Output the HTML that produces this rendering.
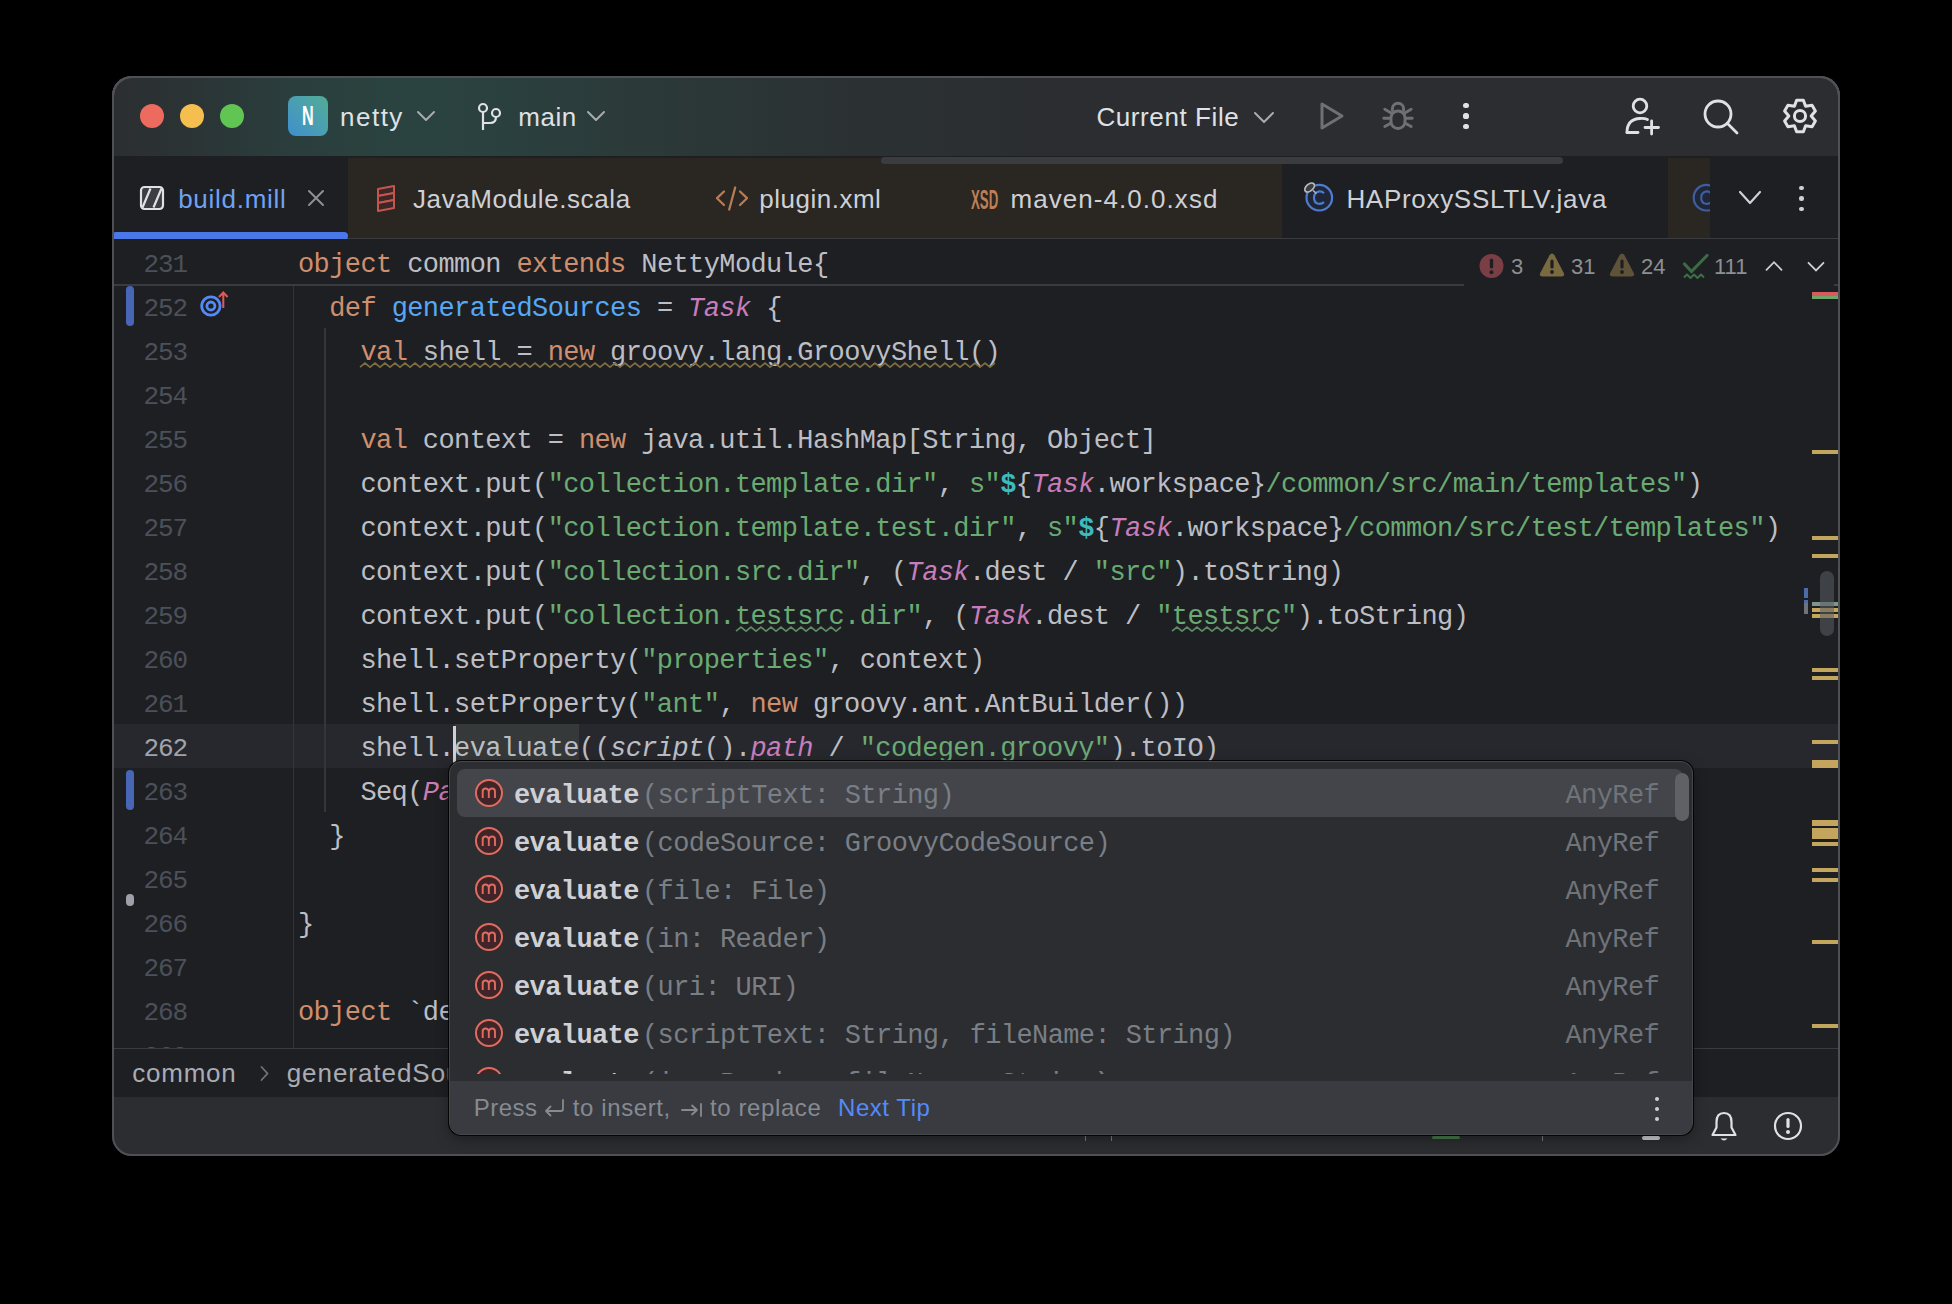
<!DOCTYPE html>
<html><head><meta charset="utf-8">
<style>
*{margin:0;padding:0;box-sizing:border-box}
html,body{width:1952px;height:1304px;background:#000;overflow:hidden}
body{position:relative;font-family:"Liberation Sans",sans-serif}
#win{position:absolute;left:0;top:0;width:1952px;height:1304px;clip-path:inset(76px 112px 148px 112px round 20px);background:#1E1F22}
.t{position:absolute;white-space:pre}
.r{position:absolute}
.s{position:absolute;overflow:visible}
.code{position:absolute;white-space:pre;font-family:"Liberation Mono",monospace;font-size:27px;line-height:27px;letter-spacing:-0.6px}
</style></head><body>
<div id="win">
<div class="r" style="left:112px;top:76px;width:1728px;height:80px;background:linear-gradient(90deg,#2B2E31 0px,#2B3536 90px,#2A3F3D 190px,#2A4340 290px,#2A413F 380px,#2B3A39 520px,#2B3234 720px,#2B2E31 900px,#2B2D30 1000px,#2B2D30 1728px);border-radius:0px;"></div><div class="r" style="left:140px;top:104px;width:24px;height:24px;border-radius:50%;background:#ED6A5E"></div><div class="r" style="left:180px;top:104px;width:24px;height:24px;border-radius:50%;background:#F4BF4F"></div><div class="r" style="left:220px;top:104px;width:24px;height:24px;border-radius:50%;background:#61C554"></div><div class="r" style="left:288px;top:96px;width:40px;height:40px;background:linear-gradient(45deg,#3E8FCC 0%,#4BA0B0 55%,#52AC94 100%);border-radius:8px;"></div><div class="t" style="left:301.50px;top:103.13px;font-size:27px;line-height:27px;color:#FFFFFF;font-family:'Liberation Sans';font-weight:400;letter-spacing:0px;transform:scaleX(0.6);transform-origin:0 0;font-weight:700;">N</div><div class="t" style="left:340.00px;top:103.68px;font-size:26px;line-height:26px;color:#DFE1E5;font-family:'Liberation Sans';font-weight:400;letter-spacing:1.5px;">netty</div><svg class="s" style="left:416px;top:110px;" width="20" height="12" viewBox="0 0 20 12"><polyline points="2,2 10.0,10 18,2" fill="none" stroke="#A8ABB0" stroke-width="2" stroke-linecap="round" stroke-linejoin="round"/></svg><svg class="s" style="left:476px;top:102px;" width="28" height="30" viewBox="0 0 28 30"><g fill="none" stroke="#DFE1E5" stroke-width="2.2"><circle cx="7" cy="6" r="4"/><circle cx="20" cy="11" r="4"/><path d="M7 10 V28"/><path d="M20 15 Q20 21 14 21 H7"/></g></svg><div class="t" style="left:518.30px;top:103.68px;font-size:26px;line-height:26px;color:#DFE1E5;font-family:'Liberation Sans';font-weight:400;letter-spacing:0.55px;">main</div><svg class="s" style="left:586px;top:110px;" width="20" height="12" viewBox="0 0 20 12"><polyline points="2,2 10.0,10 18,2" fill="none" stroke="#A8ABB0" stroke-width="2" stroke-linecap="round" stroke-linejoin="round"/></svg><div class="t" style="left:1096.40px;top:103.78px;font-size:26px;line-height:26px;color:#DFE1E5;font-family:'Liberation Sans';font-weight:400;letter-spacing:0.6px;">Current File</div><svg class="s" style="left:1253px;top:111px;" width="22" height="13" viewBox="0 0 22 13"><polyline points="2,2 11.0,11 20,2" fill="none" stroke="#A8ABB0" stroke-width="2" stroke-linecap="round" stroke-linejoin="round"/></svg><svg class="s" style="left:1316px;top:100px;" width="30" height="32" viewBox="0 0 30 32"><path d="M6 4 L6 28 L26 16 Z" fill="none" stroke="#6E7074" stroke-width="3" stroke-linejoin="round"/></svg><svg class="s" style="left:1380px;top:100px;" width="36" height="32" viewBox="0 0 36 32"><g fill="none" stroke="#6E7074" stroke-width="2.9" stroke-linecap="round"><path d="M12.4 10.5 V8.8 A5.6 5.6 0 0 1 23.6 8.8 V10.5"/><rect x="11" y="11" width="14" height="17.5" rx="7"/><path d="M4.8 9.3 L10.8 12.8 M3.8 18.2 H10.5 M4.8 26.6 L10.8 23.2 M31.2 9.3 L25.2 12.8 M32.2 18.2 H25.5 M31.2 26.6 L25.2 23.2"/></g></svg><div class="r" style="left:1463.4px;top:102.9px;width:5.2px;height:5.2px;border-radius:50%;background:#DFE1E5"></div><div class="r" style="left:1463.4px;top:113.4px;width:5.2px;height:5.2px;border-radius:50%;background:#DFE1E5"></div><div class="r" style="left:1463.4px;top:123.9px;width:5.2px;height:5.2px;border-radius:50%;background:#DFE1E5"></div><svg class="s" style="left:1622px;top:96px;" width="42" height="42" viewBox="0 0 42 42"><g fill="none" stroke="#DFE1E5" stroke-width="2.8" stroke-linecap="round"><circle cx="18" cy="10" r="6.8"/><path d="M5 36.5 Q5 23 18 22.5 Q23 22.3 25.5 23.5"/><path d="M5 36.5 H16"/><path d="M29.6 25 V38 M23 31.5 H36.5"/></g></svg><svg class="s" style="left:1702px;top:98px;" width="40" height="40" viewBox="0 0 40 40"><g fill="none" stroke="#DFE1E5" stroke-width="2.8" stroke-linecap="round"><circle cx="16" cy="16" r="13"/><path d="M25.5 25.5 L35 35"/></g></svg><svg class="s" style="left:1783px;top:99px;" width="34" height="34" viewBox="0 0 34 34"><g fill="none" stroke="#DFE1E5" stroke-width="3" stroke-linejoin="round"><path d="M13.63 1.15 L20.37 1.15 L22.60 7.30 L29.04 6.16 L32.41 11.99 L28.20 17.00 L32.41 22.01 L29.04 27.84 L22.60 26.70 L20.37 32.85 L13.63 32.85 L11.40 26.70 L4.96 27.84 L1.59 22.01 L5.80 17.00 L1.59 11.99 L4.96 6.16 L11.40 7.30 Z"/><circle cx="17" cy="17" r="5.6"/></g></svg><div class="r" style="left:112px;top:156px;width:1728px;height:83px;background:#1E1F22;border-radius:0px;"></div><div class="r" style="left:348px;top:158px;width:934px;height:80px;background:#2A2622;border-radius:0px;"></div><div class="r" style="left:1668px;top:158px;width:42px;height:80px;background:#2A2622;border-radius:0px;"></div><div class="r" style="left:112px;top:238px;width:1728px;height:1px;background:#393B40;border-radius:0px;"></div><div class="r" style="left:881px;top:157px;width:682px;height:7px;background:#3A3C40;border-radius:3.5px;"></div><div class="r" style="left:112px;top:232px;width:236px;height:8px;background:#4A78E8;border-radius:4px;"></div><svg class="s" style="left:139px;top:185px;" width="26" height="26" viewBox="0 0 26 26"><rect x="2" y="2" width="22" height="22" rx="3.5" fill="#3C3E43" stroke="#DFE1E5" stroke-width="2.2"/><path d="M3.5 22.5 L11.5 3.5 M14.5 22.5 L22.5 3.5" stroke="#DFE1E5" stroke-width="2.2" fill="none"/></svg><div class="t" style="left:178.20px;top:185.98px;font-size:26px;line-height:26px;color:#6FA2F3;font-family:'Liberation Sans';font-weight:400;letter-spacing:0.72px;">build.mill</div><svg class="s" style="left:306px;top:188px;" width="20" height="20" viewBox="0 0 20 20"><path d="M3 3 L17 17 M17 3 L3 17" stroke="#8C8F94" stroke-width="2" stroke-linecap="round"/></svg><svg class="s" style="left:372px;top:182px;" width="28" height="32" viewBox="0 0 28 32"><g fill="#3A2726" stroke="#C4554F" stroke-width="2" stroke-linejoin="round"><path d="M6 7 L22 4 V11 L6 14 Z"/><path d="M6 14 L22 11 V18 L6 21 Z"/><path d="M6 21 L22 18 V26 L6 29 Z"/></g></svg><div class="t" style="left:413.00px;top:185.98px;font-size:26px;line-height:26px;color:#CED0D6;font-family:'Liberation Sans';font-weight:400;letter-spacing:0.6px;">JavaModule.scala</div><svg class="s" style="left:714px;top:184px;" width="36" height="28" viewBox="0 0 36 28"><g fill="none" stroke="#B97B55" stroke-width="2.3" stroke-linecap="round" stroke-linejoin="round"><path d="M10 7.5 L3 14.2 L10 21"/><path d="M26 7.5 L33 14.2 L26 21"/><path d="M21.2 3.5 L15.2 25.5"/></g></svg><div class="t" style="left:759.30px;top:185.98px;font-size:26px;line-height:26px;color:#CED0D6;font-family:'Liberation Sans';font-weight:400;letter-spacing:0.5px;">plugin.xml</div><div class="t" style="left:970.50px;top:186.63px;font-size:27px;line-height:27px;color:#BD7F55;font-family:'Liberation Sans';font-weight:400;letter-spacing:0px;transform:scaleX(0.49);transform-origin:0 0;font-weight:700;">XSD</div><div class="t" style="left:1010.50px;top:185.98px;font-size:26px;line-height:26px;color:#CED0D6;font-family:'Liberation Sans';font-weight:400;letter-spacing:1.05px;">maven-4.0.0.xsd</div><svg class="s" style="left:1302px;top:180px;" width="36" height="36" viewBox="0 0 36 36"><circle cx="17.3" cy="17.7" r="12.8" fill="#1F2638" stroke="#4F7BD0" stroke-width="2.2"/><path d="M22 13.2 Q19.5 11 16.5 11.6 Q12 12.6 12 17.7 Q12 22.8 16.5 23.8 Q19.5 24.4 22 22.2" fill="none" stroke="#4F7BD0" stroke-width="2.2"/><ellipse cx="7.6" cy="7.5" rx="5.6" ry="3.4" transform="rotate(-40 7.6 7.5)" fill="#3A3C40" stroke="#B4B7BC" stroke-width="1.8"/><path d="M11 10.5 L14.5 13.5" stroke="#B4B7BC" stroke-width="1.6"/></svg><div class="t" style="left:1346.40px;top:185.98px;font-size:26px;line-height:26px;color:#CED0D6;font-family:'Liberation Sans';font-weight:400;letter-spacing:0.7px;">HAProxySSLTLV.java</div><svg style="position:absolute;left:1690px;top:180px;overflow:hidden" width="20" height="36" viewBox="0 0 20 36"><circle cx="16.5" cy="17.7" r="12.8" fill="#1F2638" stroke="#3F5E9E" stroke-width="2.2"/><path d="M21.2 13.2 Q18.7 11 15.7 11.6 Q11.2 12.6 11.2 17.7 Q11.2 22.8 15.7 23.8 Q18.7 24.4 21.2 22.2" fill="none" stroke="#3F5E9E" stroke-width="2.2"/></svg><svg class="s" style="left:1738px;top:190px;" width="24" height="15" viewBox="0 0 24 15"><polyline points="2,2 12.0,13 22,2" fill="none" stroke="#CED0D6" stroke-width="2.2" stroke-linecap="round" stroke-linejoin="round"/></svg><div class="r" style="left:1799.3999999999999px;top:185.8px;width:4.4px;height:4.4px;border-radius:50%;background:#CED0D6"></div><div class="r" style="left:1799.3999999999999px;top:196.3px;width:4.4px;height:4.4px;border-radius:50%;background:#CED0D6"></div><div class="r" style="left:1799.3999999999999px;top:206.8px;width:4.4px;height:4.4px;border-radius:50%;background:#CED0D6"></div><div class="r" style="left:112px;top:239px;width:1728px;height:810px;background:#1E1F22;border-radius:0px;"></div><div class="r" style="left:112px;top:724px;width:1726px;height:44px;background:#26282D;border-radius:0px;"></div><div class="r" style="left:455px;top:724px;width:124px;height:44px;background:#36393A;border-radius:0px;"></div><div class="r" style="left:292.5px;top:284px;width:1.6px;height:765px;background:#33353A;border-radius:0px;"></div><div class="r" style="left:324.2px;top:328px;width:1.6px;height:484px;background:#33353A;border-radius:0px;"></div><div class="r" style="left:112px;top:284px;width:1352px;height:2px;background:#393B40;border-radius:0px;"></div><div class="r" style="left:1834px;top:284px;width:6px;height:2px;background:#393B40;border-radius:0px;"></div><div class="t" style="left:143.5px;top:252.38px;font-family:'Liberation Mono';font-size:26px;line-height:26px;letter-spacing:-1.15px;color:#4B5059">231</div><div class="code" style="left:298.0px;top:252.32px"><span style="color:#CF8E6D;">object</span><span style="color:#BCBEC4;"> common </span><span style="color:#CF8E6D;">extends</span><span style="color:#BCBEC4;"> NettyModule{</span></div><div class="t" style="left:143.5px;top:296.38px;font-family:'Liberation Mono';font-size:26px;line-height:26px;letter-spacing:-1.15px;color:#4B5059">252</div><div class="code" style="left:298.0px;top:296.32px"><span style="color:#BCBEC4;">  </span><span style="color:#CF8E6D;">def</span><span style="color:#BCBEC4;"> </span><span style="color:#56A8F5;">generatedSources</span><span style="color:#BCBEC4;"> = </span><span style="color:#C77DBB;font-style:italic;">Task</span><span style="color:#BCBEC4;"> {</span></div><div class="t" style="left:143.5px;top:340.38px;font-family:'Liberation Mono';font-size:26px;line-height:26px;letter-spacing:-1.15px;color:#4B5059">253</div><div class="code" style="left:298.0px;top:340.32px"><span style="color:#BCBEC4;">    </span><span style="color:#CF8E6D;">val</span><span style="color:#BCBEC4;"> shell = </span><span style="color:#CF8E6D;">new</span><span style="color:#BCBEC4;"> groovy.lang.GroovyShell()</span></div><div class="t" style="left:143.5px;top:384.38px;font-family:'Liberation Mono';font-size:26px;line-height:26px;letter-spacing:-1.15px;color:#4B5059">254</div><div class="t" style="left:143.5px;top:428.38px;font-family:'Liberation Mono';font-size:26px;line-height:26px;letter-spacing:-1.15px;color:#4B5059">255</div><div class="code" style="left:298.0px;top:428.32px"><span style="color:#BCBEC4;">    </span><span style="color:#CF8E6D;">val</span><span style="color:#BCBEC4;"> context = </span><span style="color:#CF8E6D;">new</span><span style="color:#BCBEC4;"> java.util.HashMap[String, Object]</span></div><div class="t" style="left:143.5px;top:472.38px;font-family:'Liberation Mono';font-size:26px;line-height:26px;letter-spacing:-1.15px;color:#4B5059">256</div><div class="code" style="left:298.0px;top:472.32px"><span style="color:#BCBEC4;">    context.put(</span><span style="color:#6AAB73;">&quot;collection.template.dir&quot;</span><span style="color:#BCBEC4;">, </span><span style="color:#6AAB73;">s&quot;</span><span style="color:#3FB9C0;font-weight:700;">$</span><span style="color:#BCBEC4;">{</span><span style="color:#C77DBB;font-style:italic;">Task</span><span style="color:#BCBEC4;">.workspace}</span><span style="color:#6AAB73;">/common/src/main/templates&quot;</span><span style="color:#BCBEC4;">)</span></div><div class="t" style="left:143.5px;top:516.38px;font-family:'Liberation Mono';font-size:26px;line-height:26px;letter-spacing:-1.15px;color:#4B5059">257</div><div class="code" style="left:298.0px;top:516.32px"><span style="color:#BCBEC4;">    context.put(</span><span style="color:#6AAB73;">&quot;collection.template.test.dir&quot;</span><span style="color:#BCBEC4;">, </span><span style="color:#6AAB73;">s&quot;</span><span style="color:#3FB9C0;font-weight:700;">$</span><span style="color:#BCBEC4;">{</span><span style="color:#C77DBB;font-style:italic;">Task</span><span style="color:#BCBEC4;">.workspace}</span><span style="color:#6AAB73;">/common/src/test/templates&quot;</span><span style="color:#BCBEC4;">)</span></div><div class="t" style="left:143.5px;top:560.38px;font-family:'Liberation Mono';font-size:26px;line-height:26px;letter-spacing:-1.15px;color:#4B5059">258</div><div class="code" style="left:298.0px;top:560.32px"><span style="color:#BCBEC4;">    context.put(</span><span style="color:#6AAB73;">&quot;collection.src.dir&quot;</span><span style="color:#BCBEC4;">, (</span><span style="color:#C77DBB;font-style:italic;">Task</span><span style="color:#BCBEC4;">.dest / </span><span style="color:#6AAB73;">&quot;src&quot;</span><span style="color:#BCBEC4;">).toString)</span></div><div class="t" style="left:143.5px;top:604.38px;font-family:'Liberation Mono';font-size:26px;line-height:26px;letter-spacing:-1.15px;color:#4B5059">259</div><div class="code" style="left:298.0px;top:604.32px"><span style="color:#BCBEC4;">    context.put(</span><span style="color:#6AAB73;">&quot;collection.testsrc.dir&quot;</span><span style="color:#BCBEC4;">, (</span><span style="color:#C77DBB;font-style:italic;">Task</span><span style="color:#BCBEC4;">.dest / </span><span style="color:#6AAB73;">&quot;testsrc&quot;</span><span style="color:#BCBEC4;">).toString)</span></div><div class="t" style="left:143.5px;top:648.38px;font-family:'Liberation Mono';font-size:26px;line-height:26px;letter-spacing:-1.15px;color:#4B5059">260</div><div class="code" style="left:298.0px;top:648.32px"><span style="color:#BCBEC4;">    shell.setProperty(</span><span style="color:#6AAB73;">&quot;properties&quot;</span><span style="color:#BCBEC4;">, context)</span></div><div class="t" style="left:143.5px;top:692.38px;font-family:'Liberation Mono';font-size:26px;line-height:26px;letter-spacing:-1.15px;color:#4B5059">261</div><div class="code" style="left:298.0px;top:692.32px"><span style="color:#BCBEC4;">    shell.setProperty(</span><span style="color:#6AAB73;">&quot;ant&quot;</span><span style="color:#BCBEC4;">, </span><span style="color:#CF8E6D;">new</span><span style="color:#BCBEC4;"> groovy.ant.AntBuilder())</span></div><div class="t" style="left:143.5px;top:736.38px;font-family:'Liberation Mono';font-size:26px;line-height:26px;letter-spacing:-1.15px;color:#A1A3AB">262</div><div class="code" style="left:298.0px;top:736.32px"><span style="color:#BCBEC4;">    shell.evaluate((</span><span style="color:#BCBEC4;font-style:italic;">script</span><span style="color:#BCBEC4;">().</span><span style="color:#C77DBB;font-style:italic;">path</span><span style="color:#BCBEC4;"> / </span><span style="color:#6AAB73;">&quot;codegen.groovy&quot;</span><span style="color:#BCBEC4;">).toIO)</span></div><div class="t" style="left:143.5px;top:780.38px;font-family:'Liberation Mono';font-size:26px;line-height:26px;letter-spacing:-1.15px;color:#4B5059">263</div><div class="code" style="left:298.0px;top:780.32px"><span style="color:#BCBEC4;">    Seq(</span><span style="color:#C77DBB;font-style:italic;">PathRef</span><span style="color:#BCBEC4;">(Task.dest))</span></div><div class="t" style="left:143.5px;top:824.38px;font-family:'Liberation Mono';font-size:26px;line-height:26px;letter-spacing:-1.15px;color:#4B5059">264</div><div class="code" style="left:298.0px;top:824.32px"><span style="color:#BCBEC4;">  }</span></div><div class="t" style="left:143.5px;top:868.38px;font-family:'Liberation Mono';font-size:26px;line-height:26px;letter-spacing:-1.15px;color:#4B5059">265</div><div class="t" style="left:143.5px;top:912.38px;font-family:'Liberation Mono';font-size:26px;line-height:26px;letter-spacing:-1.15px;color:#4B5059">266</div><div class="code" style="left:298.0px;top:912.32px"><span style="color:#BCBEC4;">}</span></div><div class="t" style="left:143.5px;top:956.38px;font-family:'Liberation Mono';font-size:26px;line-height:26px;letter-spacing:-1.15px;color:#4B5059">267</div><div class="t" style="left:143.5px;top:1000.38px;font-family:'Liberation Mono';font-size:26px;line-height:26px;letter-spacing:-1.15px;color:#4B5059">268</div><div class="code" style="left:298.0px;top:1000.32px"><span style="color:#CF8E6D;">object</span><span style="color:#BCBEC4;"> `dev` </span><span style="color:#CF8E6D;">extends</span><span style="color:#BCBEC4;"> NettyModule</span></div><div class="t" style="left:143.5px;top:1044.38px;font-family:'Liberation Mono';font-size:26px;line-height:26px;letter-spacing:-1.15px;color:#4B5059">269</div><div class="code" style="left:298.0px;top:1044.32px"><span style="color:#BCBEC4;">  </span></div><svg class="s" style="left:360px;top:362px;" width="640" height="7" viewBox="0 0 640 7"><path d="M0 4.2 L5.0 0 L10.0 4.2 L15.0 0 L20.0 4.2 L25.0 0 L30.0 4.2 L35.0 0 L40.0 4.2 L45.0 0 L50.0 4.2 L55.0 0 L60.0 4.2 L65.0 0 L70.0 4.2 L75.0 0 L80.0 4.2 L85.0 0 L90.0 4.2 L95.0 0 L100.0 4.2 L105.0 0 L110.0 4.2 L115.0 0 L120.0 4.2 L125.0 0 L130.0 4.2 L135.0 0 L140.0 4.2 L145.0 0 L150.0 4.2 L155.0 0 L160.0 4.2 L165.0 0 L170.0 4.2 L175.0 0 L180.0 4.2 L185.0 0 L190.0 4.2 L195.0 0 L200.0 4.2 L205.0 0 L210.0 4.2 L215.0 0 L220.0 4.2 L225.0 0 L230.0 4.2 L235.0 0 L240.0 4.2 L245.0 0 L250.0 4.2 L255.0 0 L260.0 4.2 L265.0 0 L270.0 4.2 L275.0 0 L280.0 4.2 L285.0 0 L290.0 4.2 L295.0 0 L300.0 4.2 L305.0 0 L310.0 4.2 L315.0 0 L320.0 4.2 L325.0 0 L330.0 4.2 L335.0 0 L340.0 4.2 L345.0 0 L350.0 4.2 L355.0 0 L360.0 4.2 L365.0 0 L370.0 4.2 L375.0 0 L380.0 4.2 L385.0 0 L390.0 4.2 L395.0 0 L400.0 4.2 L405.0 0 L410.0 4.2 L415.0 0 L420.0 4.2 L425.0 0 L430.0 4.2 L435.0 0 L440.0 4.2 L445.0 0 L450.0 4.2 L455.0 0 L460.0 4.2 L465.0 0 L470.0 4.2 L475.0 0 L480.0 4.2 L485.0 0 L490.0 4.2 L495.0 0 L500.0 4.2 L505.0 0 L510.0 4.2 L515.0 0 L520.0 4.2 L525.0 0 L530.0 4.2 L535.0 0 L540.0 4.2 L545.0 0 L550.0 4.2 L555.0 0 L560.0 4.2 L565.0 0 L570.0 4.2 L575.0 0 L580.0 4.2 L585.0 0 L590.0 4.2 L595.0 0 L600.0 4.2 L605.0 0 L610.0 4.2 L615.0 0 L620.0 4.2 L625.0 0 L630.0 4.2 L635.0 0" fill="none" stroke="#7F6E42" stroke-width="1.7" transform="translate(0,1)"/></svg><svg class="s" style="left:736px;top:626px;" width="110" height="7" viewBox="0 0 110 7"><path d="M0 4.2 L5.0 0 L10.0 4.2 L15.0 0 L20.0 4.2 L25.0 0 L30.0 4.2 L35.0 0 L40.0 4.2 L45.0 0 L50.0 4.2 L55.0 0 L60.0 4.2 L65.0 0 L70.0 4.2 L75.0 0 L80.0 4.2 L85.0 0 L90.0 4.2 L95.0 0 L100.0 4.2 L105.0 0" fill="none" stroke="#5E8A62" stroke-width="1.7" transform="translate(0,1)"/></svg><svg class="s" style="left:1172px;top:626px;" width="111" height="7" viewBox="0 0 111 7"><path d="M0 4.2 L5.0 0 L10.0 4.2 L15.0 0 L20.0 4.2 L25.0 0 L30.0 4.2 L35.0 0 L40.0 4.2 L45.0 0 L50.0 4.2 L55.0 0 L60.0 4.2 L65.0 0 L70.0 4.2 L75.0 0 L80.0 4.2 L85.0 0 L90.0 4.2 L95.0 0 L100.0 4.2 L105.0 0" fill="none" stroke="#5E8A62" stroke-width="1.7" transform="translate(0,1)"/></svg><div class="r" style="left:453px;top:726px;width:3px;height:41px;background:#CED0D6;border-radius:0px;"></div><div class="r" style="left:126px;top:286px;width:8px;height:40px;background:#4766B5;border-radius:4px;"></div><div class="r" style="left:126px;top:770px;width:8px;height:40px;background:#4766B5;border-radius:4px;"></div><div class="r" style="left:126px;top:894px;width:8px;height:12px;background:#9DA0A8;border-radius:4px;"></div><svg class="s" style="left:196px;top:288px;" width="36" height="36" viewBox="0 0 36 36"><g fill="none" stroke="#548AF7" stroke-width="2.8"><circle cx="14.9" cy="18" r="9.2"/><circle cx="14.9" cy="18" r="4"/></g><path d="M27.3 20 L27.3 5 M23 9 L27.3 4.5 L31.6 9" fill="none" stroke="#DB5C5C" stroke-width="2"/></svg><div class="r" style="left:1464px;top:244px;width:370px;height:40px;background:#1E1F22;border-radius:0px;"></div><svg class="s" style="left:1478px;top:253px;" width="28" height="26" viewBox="0 0 28 26"><circle cx="13.5" cy="13" r="12" fill="#7A3F45"/><rect x="11.8" y="5.5" width="3.4" height="10" rx="1.7" fill="#1E1F22"/><circle cx="13.5" cy="19.3" r="2" fill="#1E1F22"/></svg><div class="t" style="left:1511.00px;top:255.67px;font-size:22px;line-height:22px;color:#8C8F94;font-family:'Liberation Sans';font-weight:400;letter-spacing:0px;">3</div><svg class="s" style="left:1539px;top:252px;" width="26" height="26" viewBox="0 0 26 26"><path d="M13 1.5 Q14.5 1.5 15.5 3.2 L25 21.5 Q25.8 24.5 22.5 24.5 H3.5 Q0.2 24.5 1 21.5 L10.5 3.2 Q11.5 1.5 13 1.5 Z" fill="#7A6A40"/><rect x="11.4" y="7.5" width="3.2" height="9" rx="1.6" fill="#1E1F22"/><circle cx="13" cy="20" r="1.9" fill="#1E1F22"/></svg><div class="t" style="left:1571.00px;top:255.67px;font-size:22px;line-height:22px;color:#8C8F94;font-family:'Liberation Sans';font-weight:400;letter-spacing:0px;">31</div><svg class="s" style="left:1609px;top:252px;" width="26" height="26" viewBox="0 0 26 26"><path d="M13 1.5 Q14.5 1.5 15.5 3.2 L25 21.5 Q25.8 24.5 22.5 24.5 H3.5 Q0.2 24.5 1 21.5 L10.5 3.2 Q11.5 1.5 13 1.5 Z" fill="#5E5239"/><rect x="11.4" y="7.5" width="3.2" height="9" rx="1.6" fill="#1E1F22"/><circle cx="13" cy="20" r="1.9" fill="#1E1F22"/></svg><div class="t" style="left:1641.00px;top:255.67px;font-size:22px;line-height:22px;color:#8C8F94;font-family:'Liberation Sans';font-weight:400;letter-spacing:0px;">24</div><svg class="s" style="left:1682px;top:253px;" width="28" height="30" viewBox="0 0 28 30"><path d="M2.5 11 L9.5 18.5 L25 2.5" fill="none" stroke="#3D6A46" stroke-width="3.2" stroke-linecap="round" stroke-linejoin="round"/><path d="M2 24.5 L5 21.5 L8.5 25 L12 21.5 L15.5 25 L19 21.5 L22 24.5" fill="none" stroke="#3E6E48" stroke-width="2" stroke-linejoin="round"/></svg><div class="t" style="left:1714.00px;top:255.67px;font-size:22px;line-height:22px;color:#8C8F94;font-family:'Liberation Sans';font-weight:400;letter-spacing:0px;">111</div><svg class="s" style="left:1765px;top:260px;" width="18" height="12" viewBox="0 0 18 12"><polyline points="1.5,9.8 9,2.2 16.5,9.8" fill="none" stroke="#CED0D6" stroke-width="1.8" stroke-linecap="round"/></svg><svg class="s" style="left:1807px;top:261px;" width="18" height="12" viewBox="0 0 18 12"><polyline points="1.5,1.8 9,9.4 16.5,1.8" fill="none" stroke="#CED0D6" stroke-width="1.8" stroke-linecap="round"/></svg><div class="r" style="left:1812px;top:292px;width:28px;height:4px;background:#D95B5E;border-radius:0px;"></div><div class="r" style="left:1812px;top:296px;width:28px;height:2.5px;background:#6FA56A;border-radius:0px;"></div><div class="r" style="left:1812px;top:450px;width:28px;height:4px;background:#C4A55E;border-radius:0px;"></div><div class="r" style="left:1812px;top:536px;width:28px;height:4px;background:#C4A55E;border-radius:0px;"></div><div class="r" style="left:1812px;top:554px;width:28px;height:4px;background:#C4A55E;border-radius:0px;"></div><div class="r" style="left:1812px;top:607.6px;width:28px;height:4.0px;background:#C4A55E;border-radius:0px;"></div><div class="r" style="left:1812px;top:613.7px;width:28px;height:3.8999999999999773px;background:#C4A55E;border-radius:0px;"></div><div class="r" style="left:1812px;top:668px;width:28px;height:4px;background:#C4A55E;border-radius:0px;"></div><div class="r" style="left:1812px;top:676px;width:28px;height:4px;background:#C4A55E;border-radius:0px;"></div><div class="r" style="left:1812px;top:740px;width:28px;height:4px;background:#C4A55E;border-radius:0px;"></div><div class="r" style="left:1812px;top:760px;width:28px;height:8px;background:#C4A55E;border-radius:0px;"></div><div class="r" style="left:1812px;top:820px;width:28px;height:6px;background:#C4A55E;border-radius:0px;"></div><div class="r" style="left:1812px;top:828px;width:28px;height:11px;background:#C4A55E;border-radius:0px;"></div><div class="r" style="left:1812px;top:842px;width:28px;height:4px;background:#C4A55E;border-radius:0px;"></div><div class="r" style="left:1812px;top:868px;width:28px;height:4px;background:#C4A55E;border-radius:0px;"></div><div class="r" style="left:1812px;top:878px;width:28px;height:4px;background:#C4A55E;border-radius:0px;"></div><div class="r" style="left:1812px;top:940px;width:28px;height:4px;background:#C4A55E;border-radius:0px;"></div><div class="r" style="left:1812px;top:1024px;width:28px;height:4px;background:#C4A55E;border-radius:0px;"></div><div class="r" style="left:1812px;top:601.5px;width:28px;height:4px;background:#7D968A;border-radius:0px;"></div><div class="r" style="left:1804px;top:588px;width:4px;height:10px;background:#4C6CA8;border-radius:0px;"></div><div class="r" style="left:1804px;top:600px;width:4px;height:3px;background:#4C6CA8;border-radius:0px;"></div><div class="r" style="left:1804px;top:603px;width:4px;height:11px;background:#6F737A;border-radius:0px;"></div><div class="r" style="left:1820px;top:571px;width:14px;height:65px;background:rgba(90,93,99,0.55);border-radius:7px;"></div><div class="r" style="left:112px;top:1048px;width:1728px;height:1px;background:#393B40;border-radius:0px;"></div><div class="r" style="left:112px;top:1049px;width:1728px;height:48px;background:#1E1F22;border-radius:0px;"></div><div class="t" style="left:132.30px;top:1060.28px;font-size:26px;line-height:26px;color:#A9ACB2;font-family:'Liberation Sans';font-weight:400;letter-spacing:0.75px;">common</div><svg class="s" style="left:259px;top:1065px;" width="12" height="17" viewBox="0 0 12 17"><polyline points="2.5,2 8.5,8.5 2.5,15" fill="none" stroke="#6F737A" stroke-width="1.8" stroke-linecap="round"/></svg><div class="t" style="left:286.70px;top:1060.28px;font-size:26px;line-height:26px;color:#A9ACB2;font-family:'Liberation Sans';font-weight:400;letter-spacing:0.95px;">generatedSources</div><div class="r" style="left:112px;top:1097px;width:1728px;height:59px;background:#2B2D30;border-radius:0px;"></div><svg class="s" style="left:1708px;top:1110px;" width="32" height="34" viewBox="0 0 32 34"><g fill="none" stroke="#DFE1E5" stroke-width="2.2" stroke-linejoin="round"><path d="M4.5 25 L8.5 17.5 V12 Q8.5 3 16 3 Q23.5 3 23.5 12 V17.5 L27.5 25 Z"/></g><path d="M12.5 28.5 Q16 32.5 19.5 28.5 Z" fill="#DFE1E5"/></svg><svg class="s" style="left:1772px;top:1110px;" width="32" height="32" viewBox="0 0 32 32"><circle cx="16" cy="16" r="13" fill="none" stroke="#DFE1E5" stroke-width="2.2"/><rect x="14.4" y="8" width="3.2" height="10" rx="1.6" fill="#DFE1E5"/><circle cx="16" cy="22" r="2" fill="#DFE1E5"/></svg><div class="r" style="left:1084.5px;top:1136px;width:1.5px;height:5px;background:#7A7D82;border-radius:0px;"></div><div class="r" style="left:1110.5px;top:1136px;width:1.5px;height:5px;background:#7A7D82;border-radius:0px;"></div><div class="r" style="left:1432px;top:1136px;width:28px;height:3px;background:#467A48;border-radius:1.5px;"></div><div class="r" style="left:1541.5px;top:1136px;width:1.5px;height:5px;background:#7A7D82;border-radius:0px;"></div><div class="r" style="left:1642px;top:1136px;width:18px;height:4px;background:#CED0D6;border-radius:2px;"></div><div class="r" style="left:449px;top:761px;width:1244px;height:374px;border-radius:12px;background:#2B2D30;border:1px solid #45474C;box-shadow:0 0 0 1px rgba(0,0,0,0.85), 0 4px 14px rgba(0,0,0,0.35)"></div><div class="r" style="left:450px;top:769px;width:1242px;height:305px;overflow:hidden"><div class="r" style="left:7px;top:0px;width:1226px;height:48px;background:#43454A;border-radius:8px;"></div><svg class="s" style="left:24px;top:9px;" width="30" height="30" viewBox="0 0 30 30"><circle cx="15" cy="15" r="13" fill="#3F2527" stroke="#E06C60" stroke-width="2"/><path d="M8.7 20 V11.5 M8.7 13.5 Q8.7 10.5 11.5 10.5 Q14.3 10.5 14.8 13.5 V20 M14.8 13.5 Q15.3 10.5 18.2 10.5 Q21 10.5 21 13.5 V20" fill="none" stroke="#E06C60" stroke-width="1.9"/></svg><div class="code" style="left:64px;top:13.58px;color:#CED0D6;font-weight:700">evaluate</div><div class="code" style="left:192px;top:13.58px;color:#7A7E85">(scriptText: String)</div><div class="code" style="left:1115.5px;top:13.58px;color:#6F737A">AnyRef</div><svg class="s" style="left:24px;top:57px;" width="30" height="30" viewBox="0 0 30 30"><circle cx="15" cy="15" r="13" fill="#3F2527" stroke="#E06C60" stroke-width="2"/><path d="M8.7 20 V11.5 M8.7 13.5 Q8.7 10.5 11.5 10.5 Q14.3 10.5 14.8 13.5 V20 M14.8 13.5 Q15.3 10.5 18.2 10.5 Q21 10.5 21 13.5 V20" fill="none" stroke="#E06C60" stroke-width="1.9"/></svg><div class="code" style="left:64px;top:61.58px;color:#CED0D6;font-weight:700">evaluate</div><div class="code" style="left:192px;top:61.58px;color:#7A7E85">(codeSource: GroovyCodeSource)</div><div class="code" style="left:1115.5px;top:61.58px;color:#6F737A">AnyRef</div><svg class="s" style="left:24px;top:105px;" width="30" height="30" viewBox="0 0 30 30"><circle cx="15" cy="15" r="13" fill="#3F2527" stroke="#E06C60" stroke-width="2"/><path d="M8.7 20 V11.5 M8.7 13.5 Q8.7 10.5 11.5 10.5 Q14.3 10.5 14.8 13.5 V20 M14.8 13.5 Q15.3 10.5 18.2 10.5 Q21 10.5 21 13.5 V20" fill="none" stroke="#E06C60" stroke-width="1.9"/></svg><div class="code" style="left:64px;top:109.58px;color:#CED0D6;font-weight:700">evaluate</div><div class="code" style="left:192px;top:109.58px;color:#7A7E85">(file: File)</div><div class="code" style="left:1115.5px;top:109.58px;color:#6F737A">AnyRef</div><svg class="s" style="left:24px;top:153px;" width="30" height="30" viewBox="0 0 30 30"><circle cx="15" cy="15" r="13" fill="#3F2527" stroke="#E06C60" stroke-width="2"/><path d="M8.7 20 V11.5 M8.7 13.5 Q8.7 10.5 11.5 10.5 Q14.3 10.5 14.8 13.5 V20 M14.8 13.5 Q15.3 10.5 18.2 10.5 Q21 10.5 21 13.5 V20" fill="none" stroke="#E06C60" stroke-width="1.9"/></svg><div class="code" style="left:64px;top:157.58px;color:#CED0D6;font-weight:700">evaluate</div><div class="code" style="left:192px;top:157.58px;color:#7A7E85">(in: Reader)</div><div class="code" style="left:1115.5px;top:157.58px;color:#6F737A">AnyRef</div><svg class="s" style="left:24px;top:201px;" width="30" height="30" viewBox="0 0 30 30"><circle cx="15" cy="15" r="13" fill="#3F2527" stroke="#E06C60" stroke-width="2"/><path d="M8.7 20 V11.5 M8.7 13.5 Q8.7 10.5 11.5 10.5 Q14.3 10.5 14.8 13.5 V20 M14.8 13.5 Q15.3 10.5 18.2 10.5 Q21 10.5 21 13.5 V20" fill="none" stroke="#E06C60" stroke-width="1.9"/></svg><div class="code" style="left:64px;top:205.58px;color:#CED0D6;font-weight:700">evaluate</div><div class="code" style="left:192px;top:205.58px;color:#7A7E85">(uri: URI)</div><div class="code" style="left:1115.5px;top:205.58px;color:#6F737A">AnyRef</div><svg class="s" style="left:24px;top:249px;" width="30" height="30" viewBox="0 0 30 30"><circle cx="15" cy="15" r="13" fill="#3F2527" stroke="#E06C60" stroke-width="2"/><path d="M8.7 20 V11.5 M8.7 13.5 Q8.7 10.5 11.5 10.5 Q14.3 10.5 14.8 13.5 V20 M14.8 13.5 Q15.3 10.5 18.2 10.5 Q21 10.5 21 13.5 V20" fill="none" stroke="#E06C60" stroke-width="1.9"/></svg><div class="code" style="left:64px;top:253.58px;color:#CED0D6;font-weight:700">evaluate</div><div class="code" style="left:192px;top:253.58px;color:#7A7E85">(scriptText: String, fileName: String)</div><div class="code" style="left:1115.5px;top:253.58px;color:#6F737A">AnyRef</div><svg class="s" style="left:24px;top:297px;" width="30" height="30" viewBox="0 0 30 30"><circle cx="15" cy="15" r="13" fill="#3F2527" stroke="#E06C60" stroke-width="2"/><path d="M8.7 20 V11.5 M8.7 13.5 Q8.7 10.5 11.5 10.5 Q14.3 10.5 14.8 13.5 V20 M14.8 13.5 Q15.3 10.5 18.2 10.5 Q21 10.5 21 13.5 V20" fill="none" stroke="#E06C60" stroke-width="1.9"/></svg><div class="code" style="left:64px;top:301.58px;color:#CED0D6;font-weight:700">evaluate</div><div class="code" style="left:192px;top:301.58px;color:#7A7E85">(in: Reader, fileName: String)</div><div class="code" style="left:1115.5px;top:301.58px;color:#6F737A">AnyRef</div><div class="r" style="left:1225px;top:4px;width:14px;height:48px;background:#5F6165;border-radius:7px;"></div></div><div class="r" style="left:450px;top:1081px;width:1242px;height:53px;background:#393B40;border-radius:0 0 11px 11px"></div><div class="t" style="left:473.70px;top:1096.07px;font-size:24px;line-height:24px;color:#868A91;font-family:'Liberation Sans';font-weight:400;letter-spacing:0.5px;">Press</div><svg class="s" style="left:543px;top:1098px;" width="24" height="20" viewBox="0 0 24 20"><path d="M20 2 V11 Q20 13 18 13 H3 M7.5 8.5 L3 13 L7.5 17.5" fill="none" stroke="#868A91" stroke-width="1.8" stroke-linecap="round" stroke-linejoin="round"/></svg><div class="t" style="left:572.80px;top:1096.07px;font-size:24px;line-height:24px;color:#868A91;font-family:'Liberation Sans';font-weight:400;letter-spacing:0.6px;">to insert,</div><svg class="s" style="left:680px;top:1101px;" width="24" height="18" viewBox="0 0 24 18"><path d="M2 9 H17 M12 4.5 L17 9 L12 13.5 M21 3 V15" fill="none" stroke="#868A91" stroke-width="1.8" stroke-linecap="round" stroke-linejoin="round"/></svg><div class="t" style="left:710.00px;top:1096.07px;font-size:24px;line-height:24px;color:#868A91;font-family:'Liberation Sans';font-weight:400;letter-spacing:0.6px;">to replace</div><div class="t" style="left:838.00px;top:1096.07px;font-size:24px;line-height:24px;color:#548AF7;font-family:'Liberation Sans';font-weight:400;letter-spacing:0.55px;">Next Tip</div><div class="r" style="left:1654.7px;top:1096.5px;width:4.6px;height:4.6px;border-radius:50%;background:#CED0D6"></div><div class="r" style="left:1654.7px;top:1106.6000000000001px;width:4.6px;height:4.6px;border-radius:50%;background:#CED0D6"></div><div class="r" style="left:1654.7px;top:1116.6000000000001px;width:4.6px;height:4.6px;border-radius:50%;background:#CED0D6"></div></div><div style="position:absolute;left:112px;top:76px;width:1728px;height:80px;border-radius:20px 20px 0 0;border:2px solid #66686B;border-bottom:none;pointer-events:none"></div><div style="position:absolute;left:112px;top:76px;width:1728px;height:1080px;border-radius:20px;border:2px solid #4E5054;pointer-events:none"></div></body></html>
